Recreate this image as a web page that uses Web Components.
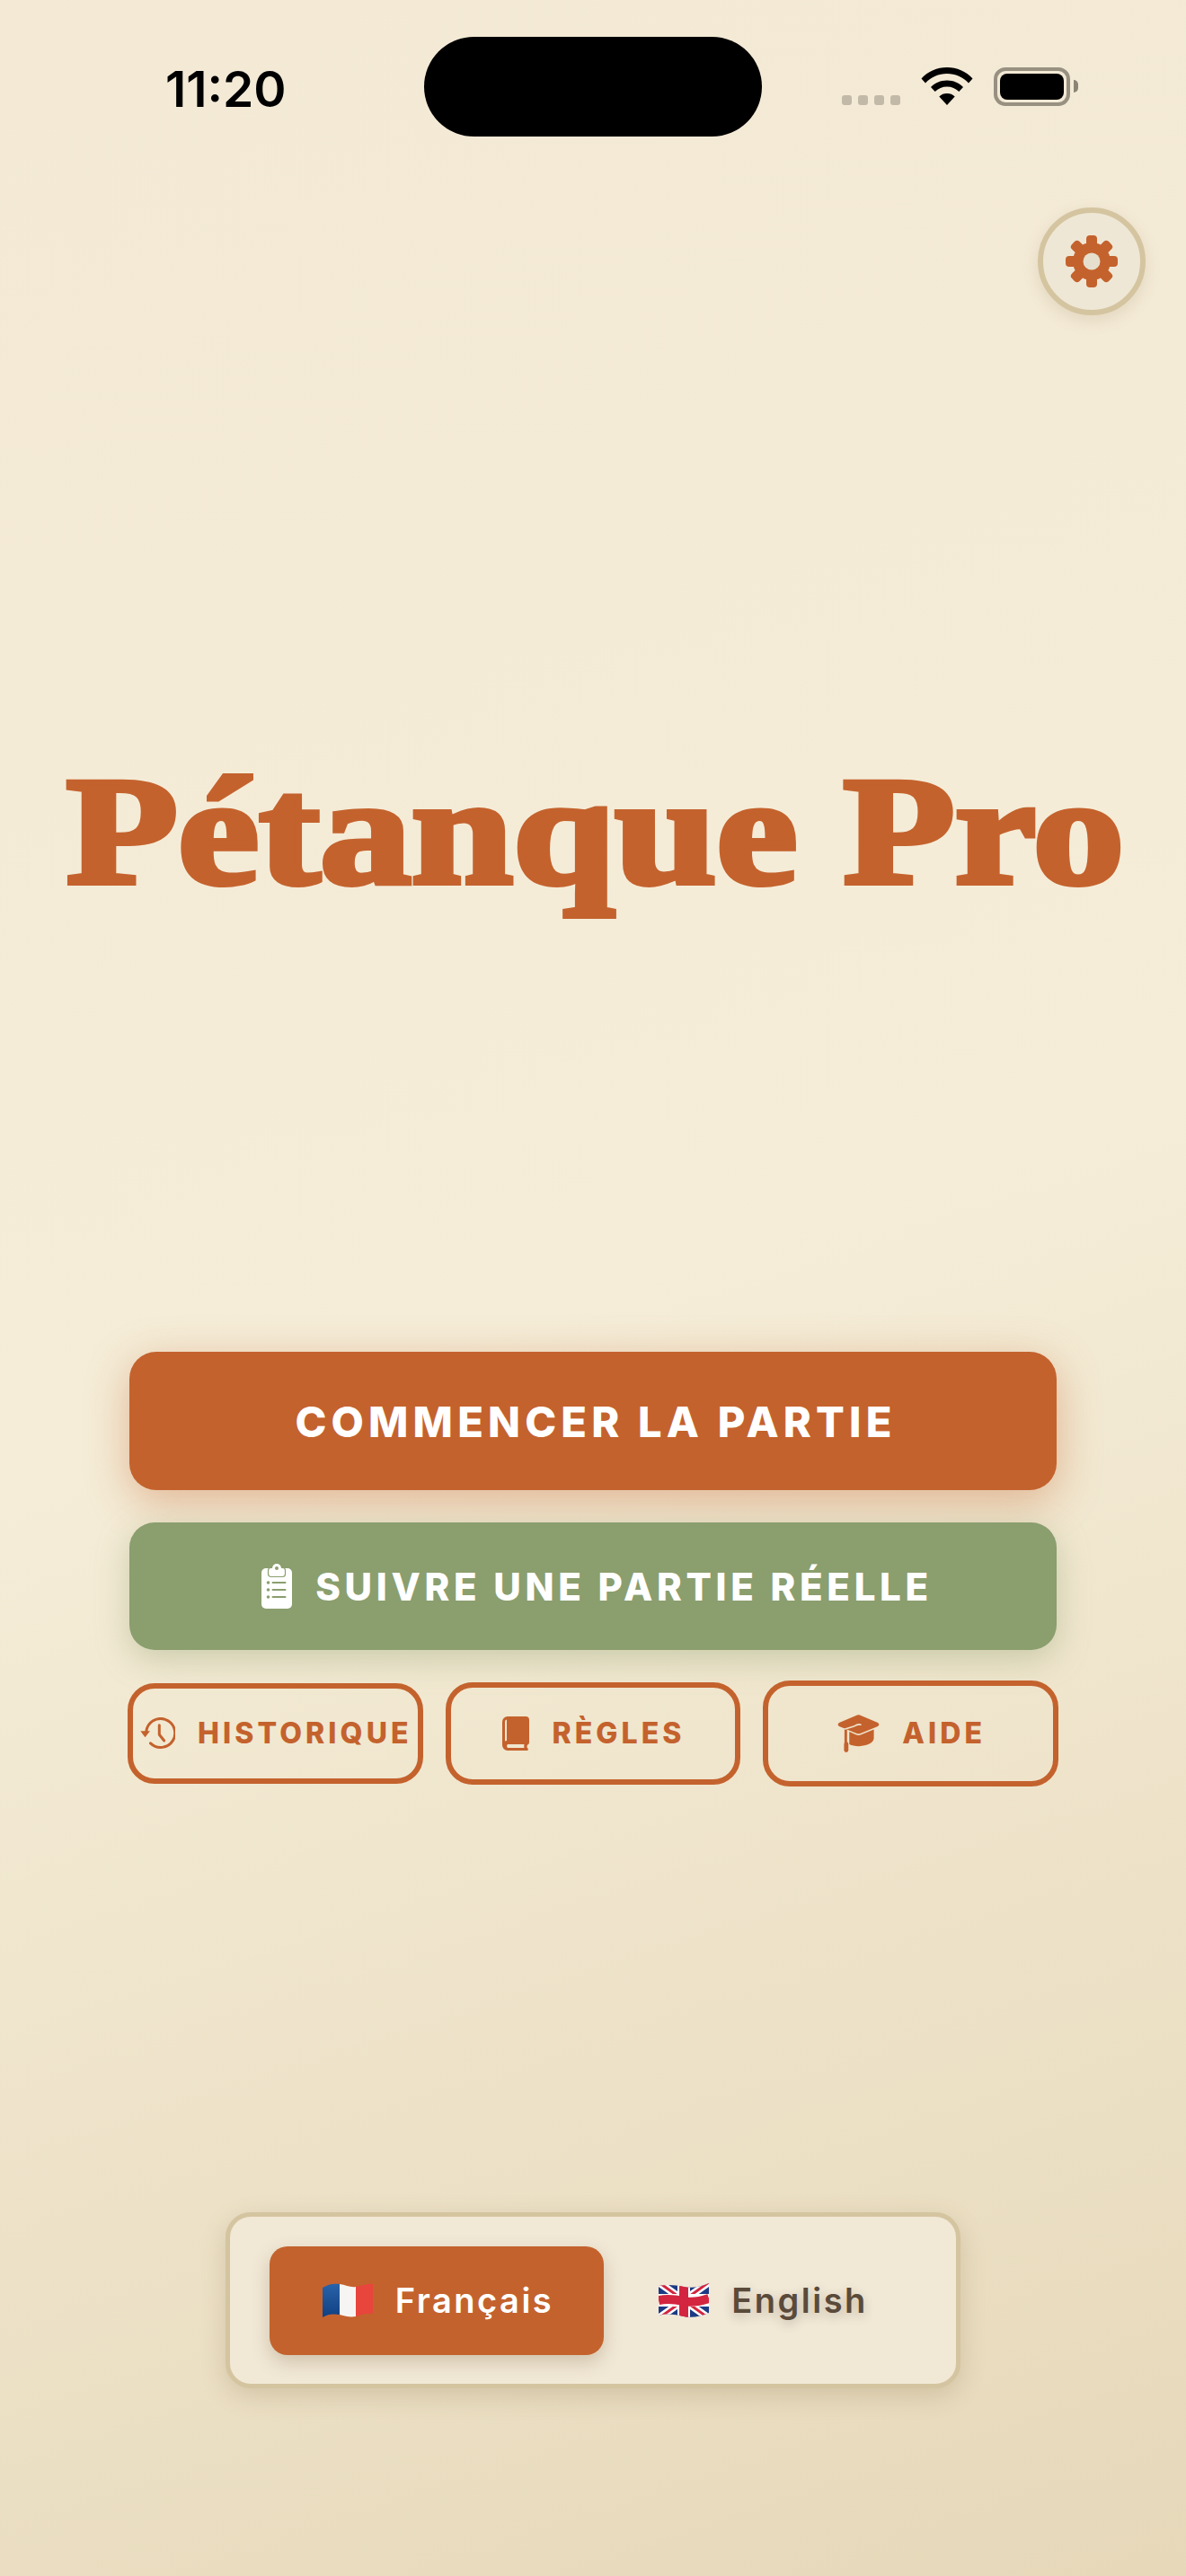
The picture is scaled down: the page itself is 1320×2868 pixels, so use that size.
<!DOCTYPE html>
<html lang="fr">
<head>
<meta charset="utf-8">
<title>Pétanque Pro</title>
<style>
  html, body { margin: 0; padding: 0; }
  body { font-family: Inter, "Liberation Sans", sans-serif; }
</style>
</head>
<body>
<petanque-app>
  <status-bar time="11:20"></status-bar>
  <settings-button></settings-button>
  <app-title>Pétanque Pro</app-title>
  <action-list>
    <action-button variant="primary">COMMENCER LA PARTIE</action-button>
    <action-button variant="secondary">
      <svg slot="icon" width="34" height="50" viewBox="0 0 34 50"><rect y="5" width="34" height="45" rx="5" fill="#fff"/><rect x="7.500" y="4.500" width="19" height="10" rx="3" fill="#fff" stroke="#8b9e6e" stroke-width="1.200"/><circle cx="17" cy="5" r="5" fill="#fff"/><circle cx="17" cy="5" r="2" fill="#8b9e6e"/><g fill="#8b9e6e"><circle cx="7.500" cy="21" r="1.800"/><circle cx="7.500" cy="29" r="1.800"/><circle cx="7.500" cy="37" r="1.800"/><rect x="11.500" y="20" width="16" height="2" rx="1"/><rect x="11.500" y="28" width="16" height="2" rx="1"/><rect x="11.500" y="36" width="16" height="2" rx="1"/></g></svg>
      SUIVRE UNE PARTIE RÉELLE
    </action-button>
    <action-row>
      <action-button variant="outline">
        <svg slot="icon" width="39" height="36" viewBox="0 0 39 36" fill="none" stroke="#c4622d" stroke-width="3" stroke-linecap="round" stroke-linejoin="round"><path d="M6.800 16A16 16 0 1 1 11.500 28.900"/><path d="M21.300 8.700v10.600l5.400 6.700"/><path d="M0.300 15.300h10.700l-5.500 7z" fill="#c4622d" stroke="none"/></svg>
        HISTORIQUE
      </action-button>
      <action-button variant="outline">
        <svg slot="icon" width="30" height="38" viewBox="0 0 30 38"><path fill="#c4622d" fill-rule="evenodd" d="M6 0h20a4 4 0 0 1 4 4v25a3 3 0 0 1-2 2.800c-.6 1-.6 2.400 0 3.400a1.500 1.500 0 0 1-1 2.800H6a6 6 0 0 1-6-6V6a6 6 0 0 1 6-6zM5 3.500A2.500 2.500 0 0 0 3 6v21.500c.6-.3 1.300-.5 2-.5zM6 31a3 3 0 0 0 0 4h18.500a8 8 0 0 1 0-4z"/></svg>
        RÈGLES
      </action-button>
      <action-button variant="outline">
        <svg slot="icon" width="47" height="42" viewBox="0 0 47 43"><path fill="#c4622d" d="M22 .5c1-.4 2-.4 3 0l20 8.500c2.400 1 2.400 3.600 0 4.600L25.500 21.500c-1.300.5-2.700.5-4 0L2 13.600c-2.400-1-2.400-3.600 0-4.600z"/><path fill="none" stroke="#eee5cf" stroke-width="1.600" stroke-linecap="round" d="M26 11.500c-2-.8-5 .2-7 1.500L7.500 16.700"/><path fill="#c4622d" d="M13 19.500l7.500 3.400c2 .8 4 .8 6 0L41 17v10c0 5-8 9-17 9-4.500 0-8-.8-11-2.200z"/><rect x="7.500" y="17" width="3" height="15" fill="#c4622d"/><rect x="7" y="31" width="5" height="12" rx="2.500" fill="#c4622d"/></svg>
        AIDE
      </action-button>
    </action-row>
  </action-list>
  <lang-switch>
    <lang-option active>
      <svg slot="flag" width="56" height="40" viewBox="0 0 56 40"><defs><clipPath id="fr"><path d="M0 6C6 2 12 1 19 2c7 1 12 4 18 3 7-1 13-4 19-3v33c-6-1-12 1-19 3-6 1-11 0-18-2-7-1-13-1-19 3z"/></clipPath><linearGradient id="frb" x1="0" x2="0" y1="0" y2="1"><stop offset="0" stop-color="#2a64ab"/><stop offset="1" stop-color="#0f3f82"/></linearGradient></defs><g clip-path="url(#fr)"><rect width="19" height="40" fill="url(#frb)"/><rect x="19" width="18" height="40" fill="#f7f5f3"/><rect x="37" width="19" height="40" fill="#e8453c"/></g></svg>
      Français
    </lang-option>
    <lang-option>
      <svg slot="flag" width="56" height="40" viewBox="0 0 56 40"><defs><clipPath id="uk"><path d="M0 4c9-2 19-1 28 1s19 0 28-4v33c-9 4-19 6-28 4S9 34 0 37z"/></clipPath></defs><g clip-path="url(#uk)"><rect width="56" height="42" fill="#1c3a84"/><path d="M0 0l56 40M56 0L0 40" stroke="#fff" stroke-width="8"/><path d="M0 0l56 40M56 0L0 40" stroke="#d3253f" stroke-width="3"/><path d="M28 0v42M0 20h56" stroke="#fff" stroke-width="14"/><path d="M28 0v42M0 20c9-2 19-1 28 1s19 0 28-3" fill="none" stroke="#d3253f" stroke-width="10"/><path d="M28 0v42" stroke="#d3253f" stroke-width="9"/></g></svg>
      English
    </lang-option>
  </lang-switch>
</petanque-app>

<template id="petanque-app-tpl">
  <style>
    :host {
      display: flex;
      flex-direction: column;
      width: 1320px;
      height: 2868px;
      overflow: hidden;
      background: linear-gradient(162deg, #f3e9d5 0%, #f5edd8 50%, #e6d8b9 100%);
    }
  </style>
  <slot></slot>
</template>

<template id="status-bar-tpl">
  <style>
    :host { display: flex; align-items: flex-start; height: 231px; box-sizing: border-box; padding: 41px 0 0 184px; font-family: Inter, sans-serif; color: #000; }
    .time { width: 132px; margin-top: 33px; font-size: 55px; line-height: 50px; font-weight: 600; letter-spacing: 0; }
    .island { width: 376px; height: 111px; margin-left: 156px; border-radius: 56px; background: #000; }
    .dots { display: flex; gap: 7px; margin: 65px 0 0 89px; }
    .dots i { width: 11px; height: 11px; border-radius: 3px; background: #c2b9a8; }
    .wifi { margin: 34px 0 0 23px; }
    .battery { position: relative; box-sizing: border-box; width: 85px; height: 43px; margin: 34px 0 0 23px; border: 4px solid #989080; border-radius: 13px; padding: 3px; }
    .battery b { display: block; height: 100%; border-radius: 8px; background: #000; }
    .battery::after { content: ""; position: absolute; right: -13px; top: 10px; width: 5px; height: 14px; border-radius: 0 7px 7px 0; background: #8c8576; }
  </style>
  <span class="time"></span>
  <div class="island"></div>
  <div class="dots"><i></i><i></i><i></i><i></i></div>
  <svg class="wifi" width="58" height="42" viewBox="0 0 58 42"><path d="M29 0c11 0 21 4.300 28.500 12.500L53 17.500C46.600 10.800 38.300 7 29 7S11.400 10.800 5 17.500L.5 12.500C8 4.300 18 0 29 0z"/><path d="M29 14.500c7 0 13.300 2.700 18 7.500l-4.700 5c-3.500-3.500-8.200-5.500-13.300-5.500S19.200 23.500 15.700 27L11 22c4.700-4.800 11-7.500 18-7.500z"/><path d="M29 29c3.400 0 6.300 1.200 8.700 3.400L29 42l-8.700-9.600C22.700 30.200 25.600 29 29 29z"/></svg>
  <div class="battery"><b></b></div>
</template>

<template id="settings-button-tpl">
  <style>
    :host { display: flex; justify-content: flex-end; padding-right: 45px; }
    .btn { display: flex; align-items: center; justify-content: center; box-sizing: border-box; width: 120px; height: 120px; border: 6px solid #d4c5a0; border-radius: 50%; background: #efe7d6; box-shadow: 0 6px 18px rgba(120,95,50,.14); }
  </style>
  <div class="btn">
    <svg width="58" height="58" viewBox="-29 -29 58 58">
      <g fill="#c4622d">
        <rect x="-6" y="-29" width="12" height="58" rx="4"/>
        <rect x="-6" y="-29" width="12" height="58" rx="4" transform="rotate(45)"/>
        <rect x="-6" y="-29" width="12" height="58" rx="4" transform="rotate(90)"/>
        <rect x="-6" y="-29" width="12" height="58" rx="4" transform="rotate(135)"/>
        <circle r="21"/>
      </g>
      <circle r="9.500" fill="#e6dfcd"/>
    </svg>
  </div>
</template>

<template id="app-title-tpl">
  <style>
    :host { display: block; margin-top: 470px; padding-left: 5px; text-align: center; }
    h1 {
      margin: 0;
      font: 700 171px/210px "Liberation Serif", serif;
      color: #c4622d;
      -webkit-text-stroke: 6px #c4622d;
      transform: scaleX(1.19);
      white-space: nowrap;
    }
  </style>
  <h1><slot></slot></h1>
</template>

<template id="action-list-tpl">
  <style>
    :host { display: flex; flex-direction: column; margin: 474px 144px 0; }
  </style>
  <slot></slot>
</template>

<template id="action-row-tpl">
  <style>
    :host { display: grid; grid-template-columns: repeat(3, 1fr); gap: 25px; align-items: center; margin: 34px -2px 0; }
  </style>
  <slot></slot>
</template>

<template id="action-button-tpl">
  <style>
    :host { display: flex; align-items: center; justify-content: center; box-sizing: border-box; font-family: Inter, sans-serif; font-weight: 800; color: #fff; white-space: nowrap; }
    :host([variant="primary"]) { height: 154px; padding-left: 6px; border-radius: 30px; background: #c4622d; font-size: 47px; letter-spacing: 5.200px; box-shadow: 0 12px 48px rgba(196,98,45,.4); }
    :host([variant="secondary"]) { height: 142px; margin-top: 36px; padding-left: 9px; gap: 26px; border-radius: 28px; background: #8b9e6e; font-size: 42px; letter-spacing: 4.700px; box-shadow: 0 10px 36px rgba(139,158,110,.4); }
    :host([variant="outline"]) { gap: 25px; padding: 32px 0 32px 2px; border: 6px solid #c4622d; border-radius: 30px; color: #c4622d; font-size: 32px; line-height: 1; letter-spacing: 4.100px; }
    slot[name="icon"]::slotted(svg) { display: block; flex: none; }
  </style>
  <slot name="icon"></slot>
  <slot></slot>
</template>

<template id="lang-switch-tpl">
  <style>
    :host { display: flex; align-items: center; box-sizing: border-box; width: 818px; height: 196px; margin: 474px 0 0 251px; padding: 0 44px; border: 5px solid #d4c5a0; border-radius: 28px; background: #f1e8d6; box-shadow: 0 8px 28px rgba(110,85,45,.2); }
  </style>
  <slot></slot>
</template>

<template id="lang-option-tpl">
  <style>
    :host { display: flex; flex: none; align-items: center; justify-content: center; gap: 25px; box-sizing: border-box; width: 352px; height: 121px; padding-left: 3px; border-radius: 20px; font-family: Inter, sans-serif; font-size: 38px; font-weight: 600; letter-spacing: 2.500px; color: #5a4a3a; text-shadow: 0 4px 12px rgba(90,74,58,.3); white-space: nowrap; }
    :host([active]) { width: 372px; background: #c4622d; color: #fff; text-shadow: none; box-shadow: 0 8px 20px rgba(110,85,45,.25); }
    slot[name="flag"]::slotted(svg) { display: block; flex: none; }
  </style>
  <slot name="flag"></slot>
  <slot></slot>
</template>

<script>
  // every element clones its template of the same name
  function simple(name, setup) {
    customElements.define(name, class extends HTMLElement {
      constructor() {
        super();
        this.attachShadow({ mode: "open" });
        const tpl = document.getElementById(name + "-tpl");
        this.shadowRoot.appendChild(tpl.content.cloneNode(true));
      }
      connectedCallback() {
        if (setup) setup(this);
      }
    });
  }

  simple("petanque-app");
  simple("status-bar", (el) => {
    el.shadowRoot.querySelector(".time").textContent = el.getAttribute("time");
  });
  simple("settings-button");
  simple("app-title");
  simple("action-list");
  simple("action-row");
  simple("action-button");
  simple("lang-switch");
  simple("lang-option");
</script>
</body>
</html>
